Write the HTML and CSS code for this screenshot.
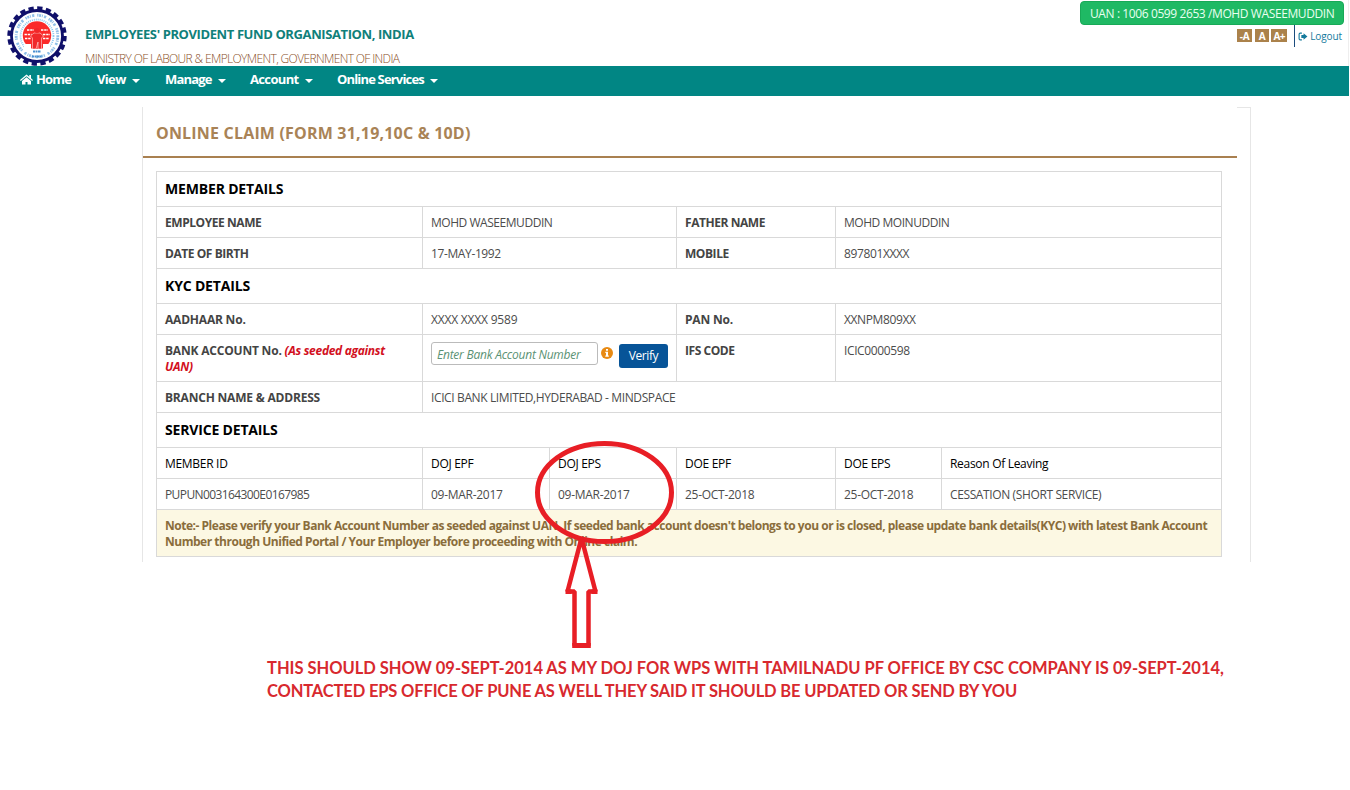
FILE: index.html
```html
<!DOCTYPE html>
<html lang="en">
<head>
<meta charset="utf-8">
<title>Online Claim</title>
<link rel="stylesheet" href="styles.css">
</head>
<body>
<div class="page">
  <header class="header">
    <svg class="logo" viewBox="0 0 60 60">
      <circle cx="30" cy="30" r="25.500" fill="#fff" stroke="#10106a" stroke-width="2.800"/>
      <circle cx="30" cy="30" r="27.600" fill="none" stroke="#10106a" stroke-width="4.200" stroke-dasharray="5.200 3.470"/>
      <circle cx="30" cy="30" r="20.800" fill="none" stroke="#8fbfe8" stroke-width="2.800" stroke-dasharray="1.300 .7 2 .8 .9 1.300 2.200 3"/>
      <circle cx="30" cy="30" r="16.500" fill="none" stroke="#8ec8f0" stroke-width="1.800" stroke-dasharray="1 1"/>
      <circle cx="30" cy="29.500" r="14.200" fill="#fb2a2a"/>
      <path d="M20 24h7M34 24h7M17.500 28.500h7M36 28.500h7M18 32.500h6M36 32.500h6" stroke="#fff" stroke-width="1.300" stroke-dasharray="2.400 .8"/>
      <path d="M25.500 43V32l-2-2 3.500-3h6l3.500 3-2 2v11h-3.500v-7l-2 7z" fill="#f0282a" stroke="#fff" stroke-width=".5"/>
      <circle cx="30" cy="24.500" r="2.500" fill="#f0282a"/>
      <path d="M17 38h7v8H17zM36 38h7v8h-7zM22 43h16v5H22z" fill="#fff"/>
      <path d="M26 45.500h8M25 50.500h10" stroke="#4a8fd0" stroke-width="2" stroke-dasharray="2 .5"/>
    </svg>
    <div class="brand">
      <div class="org"><span>EMPLOYEES' PROVIDENT FUND ORGANISATION, INDIA</span></div>
      <div class="ministry"><span>MINISTRY OF LABOUR &amp; EMPLOYMENT, GOVERNMENT OF INDIA</span></div>
    </div>
    <div class="account">
      <div class="uan"><span>UAN : 1006 0599 2653 /MOHD WASEEMUDDIN</span></div>
      <div class="tools">
        <span class="size">-A</span><span class="size">A</span><span class="size">A+</span>
        <a class="logout"><svg class="exit" viewBox="0 0 18 16"><path d="M7 2H4Q2 2 2 4v8q0 2 2 2h3" fill="none" stroke="#147a9c" stroke-width="2"/><path d="M6 5.500h4V2l7 6-7 6v-3.500H6z" fill="#147a9c"/></svg><span>Logout</span></a>
      </div>
    </div>
  </header>
  <nav class="nav">
    <a class="item home"><svg class="house" viewBox="0 0 26 22"><path d="M13 1L0 12l1.500 2L13 4.500 24.500 14l1.500-2-4-3.500V2h-3.500v3.500z" fill="#fff"/><path d="M13 6.500L4 14v7h7v-5h4v5h7v-7z" fill="#fff"/></svg><span>Home</span></a>
    <a class="item view"><span>View</span><i class="caret"></i></a>
    <a class="item manage"><span>Manage</span><i class="caret"></i></a>
    <a class="item acct"><span>Account</span><i class="caret"></i></a>
    <a class="item services"><span>Online Services</span><i class="caret"></i></a>
  </nav>
  <main class="panel">
    <h1 class="title"><span>ONLINE CLAIM (FORM 31,19,10C &amp; 10D)</span></h1>
    <table class="details">
      <colgroup><col class="c1"><col class="c2"><col class="c3"><col class="c4"><col class="c5"><col class="c6"></colgroup>
      <tr class="section"><td colspan="6"><span>MEMBER DETAILS</span></td></tr>
      <tr><th><span>EMPLOYEE NAME</span></th><td colspan="2"><span class="name">MOHD WASEEMUDDIN</span></td><th><span>FATHER NAME</span></th><td colspan="2"><span class="name">MOHD MOINUDDIN</span></td></tr>
      <tr><th><span>DATE OF BIRTH</span></th><td colspan="2"><span>17-MAY-1992</span></td><th><span>MOBILE</span></th><td colspan="2"><span>897801XXXX</span></td></tr>
      <tr class="section"><td colspan="6"><span>KYC DETAILS</span></td></tr>
      <tr><th class="wide"><span>AADHAAR No.</span></th><td colspan="2"><span class="number">XXXX XXXX 9589</span></td><th class="wide"><span>PAN No.</span></th><td colspan="2"><span>XXNPM809XX</span></td></tr>
      <tr class="bank"><th class="wide"><span>BANK ACCOUNT No. <em>(As seeded against<br>UAN)</em></span></th>
        <td colspan="2"><div class="verify"><div class="field"><span>Enter Bank Account Number</span></div><svg class="info" viewBox="0 0 12 12"><circle cx="6" cy="6" r="6" fill="#e88a13"/><path d="M5 2h2v1.700H5zM4.300 4.800H7v3.600h.8V9.800H4.300V8.400H5V6.100h-.7z" fill="#fff"/></svg><div class="button"><span>Verify</span></div></div></td>
        <th><span>IFS CODE</span></th><td colspan="2"><span>ICIC0000598</span></td></tr>
      <tr><th class="wide"><span>BRANCH NAME &amp; ADDRESS</span></th><td colspan="5"><span>ICICI BANK LIMITED,HYDERABAD - MINDSPACE</span></td></tr>
      <tr class="section"><td colspan="6"><span>SERVICE DETAILS</span></td></tr>
      <tr class="heads"><td><span>MEMBER ID</span></td><td><span>DOJ EPF</span></td><td><span>DOJ EPS</span></td><td><span>DOE EPF</span></td><td><span>DOE EPS</span></td><td><span>Reason Of Leaving</span></td></tr>
      <tr><td><span class="member">PUPUN003164300E0167985</span></td><td><span class="date">09-MAR-2017</span></td><td><span class="date">09-MAR-2017</span></td><td><span class="date">25-OCT-2018</span></td><td><span class="date">25-OCT-2018</span></td><td><span>CESSATION (SHORT SERVICE)</span></td></tr>
      <tr class="note"><td colspan="6"><span>Note:- Please verify your Bank Account Number as seeded against UAN. If seeded bank account doesn't belongs to you or is closed, please update bank details(KYC) with latest Bank Account</span><br><span>Number through Unified Portal / Your Employer before proceeding with Online claim.</span></td></tr>
    </table>
  </main>
  <p class="remark"><span>THIS SHOULD SHOW 09-SEPT-2014 AS MY DOJ FOR WPS WITH TAMILNADU PF OFFICE BY CSC COMPANY IS 09-SEPT-2014,</span><br><span class="second">CONTACTED EPS OFFICE OF PUNE AS WELL THEY SAID IT SHOULD BE UPDATED OR SEND BY YOU</span></p>
  <svg class="markup" viewBox="0 0 150 220">
    <ellipse cx="74.500" cy="62.500" rx="67" ry="49" fill="none" stroke="#e81e25" stroke-width="5"/>
    <path d="M51.500 108L37.500 161.500H44.500V215.500H58.500V161.500H65.500Z" fill="none" stroke="#e81e25" stroke-width="4.500" stroke-linejoin="bevel"/>
    <path d="M42.200 213h18.600v5H42.200zM35.500 159.500h6v4.500h-6zM61.500 159.500h6v4.500h-6z" fill="#e81e25"/>
  </svg>
</div>
</body>
</html>
```
FILE: styles.css
```css
* { box-sizing: border-box; }
body { margin: 0; background: #fff; font-family: "Open Sans", "Noto Sans", sans-serif; }
span { white-space: nowrap; }
.page { position: relative; width: 1350px; height: 790px; overflow: hidden; }
.header { display: flex; height: 66px; width: 1349px; border-right: 1px solid #eee; }
.logo { width: 60px; height: 60px; margin: 6px 0 0 7px; overflow: visible; flex: none; }
.brand { margin-left: 18px; padding-top: 24px; flex: 1; }
.org { font-size: 13px; line-height: 20px; font-weight: 700; color: #10807a; letter-spacing: -0.4px; }
.ministry { margin-top: 6px; font-size: 12px; line-height: 18px; color: #8a5028; letter-spacing: -0.64px; font-weight: 300; }
.account { width: 270px; margin-right: 4px; display: flex; flex-direction: column; align-items: flex-end; }
.uan { width: 264px; height: 24px; margin-top: 1px; border-radius: 4px; background: #1fb964; border: 1px solid #18a957; color: #e9fff1; font-size: 12px; line-height: 24px; padding-left: 9px; letter-spacing: -0.4px; }
.tools { display: flex; height: 22px; padding-top: 4px; gap: 3px; margin-right: 2px; }
.size { width: 15px; height: 13px; background: #ab824b; color: #fff; font-size: 10px; line-height: 14px; font-weight: 700; text-align: center; }
.size + .size { width: 14px; }
.size + .size + .size { width: 16px; margin-left: -1px; letter-spacing: -0.5px; }
.logout { display: flex; align-items: center; gap: 2px; height: 22px; margin: -4px 0 0 4px; padding-left: 3px; border-left: 1px solid #1b4c7d; color: #147a9c; font-size: 10px; letter-spacing: -0.1px; }
.exit { width: 10px; height: 9px; }
.nav { height: 30px; width: 1349px; display: flex; background: #018684; padding-left: 20px; }
.item { display: flex; height: 26px; align-items: center; color: #fff; font-size: 13px; font-weight: 700; letter-spacing: -0.83px; }
.home { width: 77px; gap: 3px; } .view { width: 68px; } .manage { width: 85px; } .acct { width: 87px; }
.view, .acct { letter-spacing: -0.65px; }
.house { width: 13px; height: 11px; }
.caret { margin: 3px 0 0 6px; border: 4px solid transparent; border-top-color: #fff; border-bottom: 0; width: 0; }
.panel { margin: 11px 0 0 142px; width: 1109px; height: 455px; border-left: 1px solid #e6e6e6; border-right: 1px solid #e6e6e6; background: linear-gradient(#e6e6e6, #e6e6e6) right top / 13px 1px no-repeat; }
.title { margin: 0; width: 1094px; height: 51px; padding: 15px 0 0 13px; border-bottom: 2px solid #a98050; color: #a98356; font-size: 16px; line-height: 22px; font-weight: 700; letter-spacing: 0.19px; }
.details { margin: 13px 0 0 13px; width: 1066px; table-layout: fixed; border-collapse: collapse; font-size: 12px; line-height: 16px; color: #4c4c4c; }
.c1 { width: 266px; } .c2, .c3 { width: 127px; } .c4 { width: 159px; } .c5 { width: 106px; } .c6 { width: 280px; }
.details td, .details th { border: 1px solid #d9d9d9; height: 31px; padding: 8px 8px 6px; vertical-align: top; text-align: left; font-weight: 400; letter-spacing: -0.38px; }
.details th { font-weight: 700; letter-spacing: -0.44px; color: #444; }
.details .wide { letter-spacing: -0.2px; }
.name { letter-spacing: -0.46px; }
.number { letter-spacing: -0.2px; }
.member { letter-spacing: -0.6px; }
.date { letter-spacing: -0.28px; }
.details .section td { height: 35px; padding-top: 8px; color: #000; font-size: 14px; line-height: 18px; font-weight: 700; letter-spacing: -0.17px; }
.details .bank td, .details .bank th { height: 47px; }
.details em { color: #d2101e; letter-spacing: -0.3px; }
.verify { display: flex; height: 25px; }
.field { width: 167px; height: 23px; margin-top: -1px; border: 1px solid #bbb; border-radius: 3px; padding-left: 5px; line-height: 24px; font-style: italic; color: #5b9274; letter-spacing: -0.24px; }
.info { width: 12px; height: 12px; margin: 4px 6px 0 3px; }
.button { width: 49px; height: 24px; margin-top: 1px; border-radius: 3px; background: #075498; color: #fff; line-height: 24px; text-align: center; letter-spacing: -0.4px; }
.details .heads td { color: #000; letter-spacing: -0.3px; }
.details .note td { height: 47px; background: #fcf8e3; color: #8a6d3b; font-weight: 700; letter-spacing: -0.475px; }
.remark { margin: 95px 0 0 267px; font-family: Lato, "Open Sans", sans-serif; font-size: 16.5px; line-height: 23px; font-weight: 700; color: #d8292e; letter-spacing: -0.02px; }
.second { letter-spacing: -0.15px; }
.markup { position: absolute; left: 530px; top: 430px; width: 150px; height: 220px; }
```
